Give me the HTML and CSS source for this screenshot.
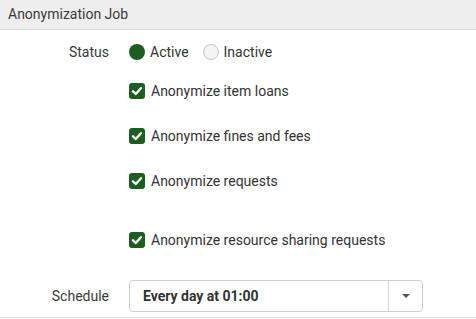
FILE: index.html
```html
<!DOCTYPE html>
<html>
<head>
<meta charset="utf-8">
<link rel="stylesheet" href="styles.css">
</head>
<body>
<div class="panel">
  <div class="panel-header">Anonymization Job</div>
  <div class="panel-body">
    <div class="row status-row">
      <div class="label">Status</div>
      <div class="control radios">
        <span class="radio on"></span><span class="radio-text">Active</span>
        <span class="radio off"></span><span class="radio-text">Inactive</span>
      </div>
    </div>
    <div class="row check-row first">
      <div class="label"></div>
      <div class="control"><span class="check"><svg viewBox="0 0 16 16" width="16" height="16"><path d="M4 8.3 L6.8 11 L12 5.2" fill="none" stroke="#fff" stroke-width="2.4" stroke-linecap="round" stroke-linejoin="round"/></svg></span><span class="check-text">Anonymize item loans</span></div>
    </div>
    <div class="row check-row">
      <div class="label"></div>
      <div class="control"><span class="check"><svg viewBox="0 0 16 16" width="16" height="16"><path d="M4 8.3 L6.8 11 L12 5.2" fill="none" stroke="#fff" stroke-width="2.4" stroke-linecap="round" stroke-linejoin="round"/></svg></span><span class="check-text">Anonymize fines and fees</span></div>
    </div>
    <div class="row check-row">
      <div class="label"></div>
      <div class="control"><span class="check"><svg viewBox="0 0 16 16" width="16" height="16"><path d="M4 8.3 L6.8 11 L12 5.2" fill="none" stroke="#fff" stroke-width="2.4" stroke-linecap="round" stroke-linejoin="round"/></svg></span><span class="check-text">Anonymize requests</span></div>
    </div>
    <div class="row check-row spaced">
      <div class="label"></div>
      <div class="control"><span class="check"><svg viewBox="0 0 16 16" width="16" height="16"><path d="M4 8.3 L6.8 11 L12 5.2" fill="none" stroke="#fff" stroke-width="2.4" stroke-linecap="round" stroke-linejoin="round"/></svg></span><span class="check-text">Anonymize resource sharing requests</span></div>
    </div>
    <div class="row schedule-row">
      <div class="label">Schedule</div>
      <div class="control">
        <div class="select">
          <div class="select-value">Every day at 01:00</div>
          <div class="select-btn"><span class="caret"></span></div>
        </div>
      </div>
    </div>
  </div>
</div>
</body>
</html>
```
FILE: styles.css
```css
* { box-sizing: border-box; }
html, body { margin: 0; padding: 0; background: #fff; }
body {
  font-family: Roboto, "Liberation Sans", sans-serif;
  font-size: 14px;
  color: #333;
  width: 476px;
  height: 319px;
  overflow: hidden;
}
.panel { border-bottom: 1px solid #ddd; }
.panel-header {
  background: #eeeeee;
  border-bottom: 1px solid #dcdcdc;
  height: 30px;
  padding: 5px 8px 0;
  line-height: 18px;
  color: #3a3a3a;
}
.panel-body { padding: 10px 0 5px; }
.row {
  display: grid;
  grid-template-columns: 109px 1fr;
  column-gap: 20px;
  align-items: center;
}
.label { text-align: right; color: #3a3a3a; }
.control { display: flex; align-items: center; }
.status-row { height: 24px; }
.radios { gap: 0; }
.radio {
  width: 16px; height: 16px; border-radius: 50%;
  display: inline-block;
}
.radio.on { background: #1b5e20; }
.radio.off {
  background: #f4f4f4;
  border: 1px solid #c4c4c4;
  margin-left: 14px;
}
.radio-text { margin-left: 5px; }
.check-row { height: 24px; margin-top: 21px; }
.check-row.first { margin-top: 15px; }
.check-row.spaced { margin-top: 35px; }
.check {
  width: 16px; height: 16px; border-radius: 3px;
  background: #1b5e20;
  display: inline-flex;
}
.check svg { display: block; }
.check-text { margin-left: 6px; }
.schedule-row { margin-top: 27px; height: 33px; }
.select {
  width: 294px;
  height: 32px;
  border: 1px solid #cfcfcf;
  border-radius: 4px;
  display: flex;
}
.select-value {
  flex: 1;
  padding-left: 13px;
  font-weight: 700;
  color: #333;
  display: flex;
  align-items: center;
  border-right: 1px solid #d6d6d6;
}
.select-btn {
  width: 33px;
  display: flex;
  align-items: center;
  justify-content: center;
}
.caret {
  width: 0; height: 0;
  border-left: 4px solid transparent;
  border-right: 4px solid transparent;
  border-top: 4px solid #555;
  margin-top: 1px;
}
```
